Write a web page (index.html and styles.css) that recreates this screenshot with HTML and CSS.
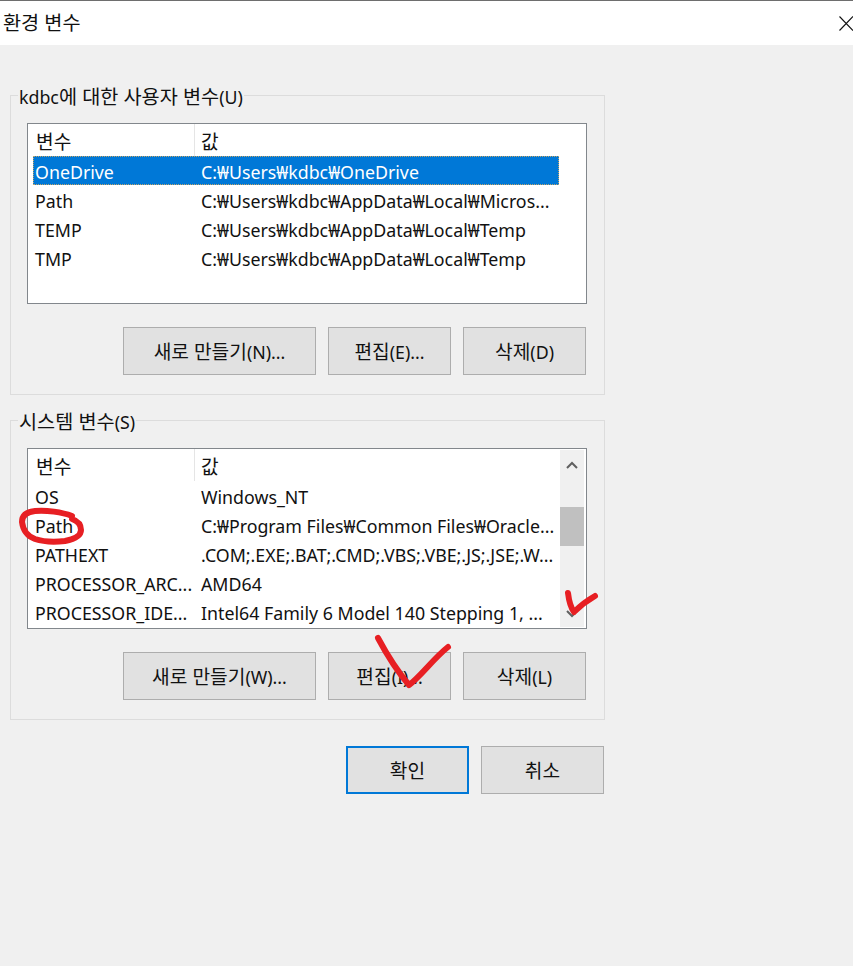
FILE: index.html
```html
<!DOCTYPE html>
<html lang="ko">
<head>
<meta charset="utf-8">
<title>환경 변수</title>
<link rel="stylesheet" href="styles.css">
</head>
<body>
<div class="dialog">
  <header class="titlebar">
    <span class="title">환경 변수</span>
    <svg class="close" width="14" height="15" viewBox="0 0 14 15"><path d="M0.5 0.5L14 14.5M14 0.5L0.5 14.5" stroke="#111" stroke-width="1.1" fill="none"/></svg>
  </header>
  <main class="content">
    <fieldset class="group">
      <legend>kdbc<span class="ko">에 대한 사용자 변수</span>(U)</legend>
      <div class="list">
        <div class="list-body">
          <div class="row head"><span class="c1 ko">변수</span><span class="c2 ko">값</span></div>
          <div class="row selected"><span class="c1">OneDrive</span><span class="c2">C:₩Users₩kdbc₩OneDrive</span></div>
          <div class="row"><span class="c1">Path</span><span class="c2">C:₩Users₩kdbc₩AppData₩Local₩Micros...</span></div>
          <div class="row"><span class="c1">TEMP</span><span class="c2">C:₩Users₩kdbc₩AppData₩Local₩Temp</span></div>
          <div class="row"><span class="c1">TMP</span><span class="c2">C:₩Users₩kdbc₩AppData₩Local₩Temp</span></div>
        </div>
      </div>
      <div class="buttons">
        <button class="btn wide"><span class="ko">새로 만들기</span>(N)...</button>
        <button class="btn"><span class="ko">편집</span>(E)...</button>
        <button class="btn"><span class="ko">삭제</span>(D)</button>
      </div>
    </fieldset>
    <fieldset class="group second">
      <legend><span class="ko">시스템 변수</span>(S)</legend>
      <div class="list">
        <div class="list-body">
          <div class="row head"><span class="c1 ko">변수</span><span class="c2 ko">값</span></div>
          <div class="row"><span class="c1">OS</span><span class="c2">Windows_NT</span></div>
          <div class="row"><span class="c1">Path</span><span class="c2">C:₩Program Files₩Common Files₩Oracle...</span></div>
          <div class="row"><span class="c1">PATHEXT</span><span class="c2">.COM;.EXE;.BAT;.CMD;.VBS;.VBE;.JS;.JSE;.W...</span></div>
          <div class="row"><span class="c1">PROCESSOR_ARC...</span><span class="c2">AMD64</span></div>
          <div class="row"><span class="c1">PROCESSOR_IDE...</span><span class="c2">Intel64 Family 6 Model 140 Stepping 1, ...</span></div>
        </div>
        <div class="scrollbar">
          <svg class="arrow" width="12" height="8" viewBox="0 0 12 8"><path d="M1 7L6 2L11 7" stroke="#606060" stroke-width="2" fill="none"/></svg>
          <div class="track"><div class="thumb"></div></div>
          <svg class="arrow down" width="12" height="8" viewBox="0 0 12 8"><path d="M1 1L6 6L11 1" stroke="#606060" stroke-width="2" fill="none"/></svg>
        </div>
      </div>
      <div class="buttons">
        <button class="btn wide"><span class="ko">새로 만들기</span>(W)...</button>
        <button class="btn"><span class="ko">편집</span>(I)...</button>
        <button class="btn"><span class="ko">삭제</span>(L)</button>
      </div>
    </fieldset>
    <div class="footer">
      <button class="btn primary"><span class="ko">확인</span></button>
      <button class="btn"><span class="ko">취소</span></button>
    </div>
  </main>
  <svg class="ink" width="853" height="966" viewBox="0 0 853 966">
    <path d="M72 516C62 512 46 510 35 511C26 512 22 516 22 522C23 530 27 536 35 539C44 542 56 542 65 541C75 539 81 535 81 530C81 525 78 521 72 519" />
    <path d="M378 638C386 653 398 672 409 685C420 677 434 658 448 647" />
    <path d="M568 593C569 601 571 608 574 612C580 606 588 600 595 596" />
  </svg>
</div>
</body>
</html>
```
FILE: styles.css
```css
* { box-sizing: border-box; }
html, body { margin: 0; padding: 0; }
body {
  width: 853px;
  height: 966px;
  overflow: hidden;
  background: #f0f0f0;
  font-family: "Noto Sans", "Noto Sans CJK KR", sans-serif;
  font-size: 17.8px;
  color: #111;
}
.ko { font-size: 19.2px; }
.dialog { position: relative; width: 853px; height: 966px; }
.titlebar {
  height: 45px;
  background: #fff;
  border-top: 1px solid #6e6e6e;
  display: flex;
  align-items: center;
  justify-content: space-between;
  padding: 0 0 0 3px;
}
.title { font-size: 19.7px; line-height: 46px; }
.content { padding: 40px 0 0 10px; }
.group {
  width: 595px;
  height: 310px;
  margin: 0;
  padding: 18px 18px 0 16px;
  border: 1px solid #dcdcdc;
  min-width: 0;
}
.group.second { margin-top: 15px; }
legend {
  margin-left: -9px;
  padding: 0 1px;
  height: 20px;
  line-height: 24px;
  font-size: 17.8px;
}
legend .ko { font-size: 19.7px; }
.list {
  width: 560px;
  height: 181px;
  background: #fff;
  border: 1px solid #82878c;
  display: flex;
}
.list-body { flex: 1; padding-left: 5px; min-width: 0; }
.row {
  display: flex;
  height: 29px;
  line-height: 33px;
  width: 526px;
  white-space: nowrap;
}
.row .c1 { width: 161px; padding-left: 2px; flex: none; }
.row .c2 { padding-left: 7px; flex: none; }
.head { height: 32px; line-height: 35px; }
.head .c1 { padding-left: 3px; border-right: 1px solid #e5e5e5; width: 162px; }
.head .c2 { padding-left: 6px; }
.selected {
  background: #0078d7;
  color: #fff;
  outline: 1px dotted #c2a468;
  outline-offset: -1px;
}
.scrollbar {
  width: 24px;
  margin: 1px 2px 1px 0;
  background: #f0f0f0;
  display: flex;
  flex-direction: column;
  align-items: center;
}
.arrow { flex: none; margin: 11px 0; }
.arrow.down { margin-bottom: 9px; }
.track { flex: 1; width: 100%; padding-top: 27px; }
.thumb { height: 39px; background: #c0c0c0; }
.buttons {
  display: flex;
  justify-content: flex-end;
  gap: 12px;
  margin-top: 23px;
}
.btn {
  width: 123px;
  height: 48px;
  padding: 0;
  background: #e1e1e1;
  border: 1.5px solid #adadad;
  border-radius: 0;
  font-family: inherit;
  font-size: 17.8px;
  color: #111;
}
.btn.wide { width: 193px; }
.btn.primary { border: 2px solid #0078d7; }
.footer {
  display: flex;
  justify-content: flex-end;
  gap: 12px;
  width: 594px;
  margin-top: 26px;
}
.ink { position: absolute; left: 0; top: 0; pointer-events: none; }
.ink path {
  fill: none;
  stroke: #e71f23;
  stroke-width: 6;
  stroke-linecap: round;
  stroke-linejoin: round;
}
```
